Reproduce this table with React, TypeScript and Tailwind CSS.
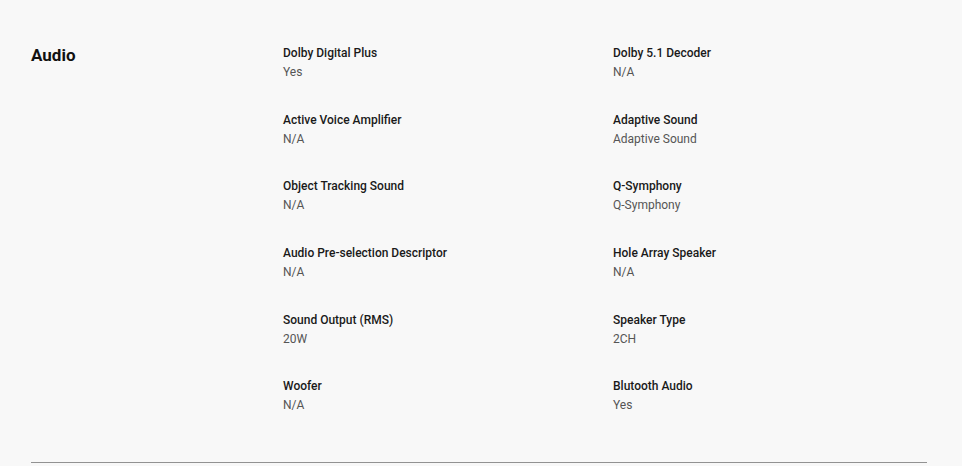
const specs = [
  { label: 'Dolby Digital Plus', value: 'Yes' },
  { label: 'Dolby 5.1 Decoder', value: 'N/A' },
  { label: 'Active Voice Amplifier', value: 'N/A' },
  { label: 'Adaptive Sound', value: 'Adaptive Sound' },
  { label: 'Object Tracking Sound', value: 'N/A' },
  { label: 'Q-Symphony', value: 'Q-Symphony' },
  { label: 'Audio Pre-selection Descriptor', value: 'N/A' },
  { label: 'Hole Array Speaker', value: 'N/A' },
  { label: 'Sound Output (RMS)', value: '20W' },
  { label: 'Speaker Type', value: '2CH' },
  { label: 'Woofer', value: 'N/A' },
  { label: 'Blutooth Audio', value: 'Yes' },
]

export default function App() {
  return (
    <div className="min-h-[466px] w-full bg-[#f8f8f8] font-['Roboto',_'Liberation_Sans',_sans-serif]">
      <section className="ml-[31px] mr-[35px] border-b border-[#929292] pt-[44px] pb-[47px]">
        <div className="flex">
          <h2 className="w-[252px] shrink-0 text-[17px] font-bold leading-[22px] text-[#111]">
            Audio
          </h2>
          <div className="grid grid-cols-[330px_330px] gap-y-[28.7px]">
            {specs.map((spec, index) => (
              <div key={index}>
                <p className="text-[12px] font-medium leading-[19px] text-[#1a1a1a]">{spec.label}</p>
                <p className="text-[12px] leading-[19px] text-[#555]">{spec.value}</p>
              </div>
            ))}
          </div>
        </div>
      </section>
    </div>
  )
}
